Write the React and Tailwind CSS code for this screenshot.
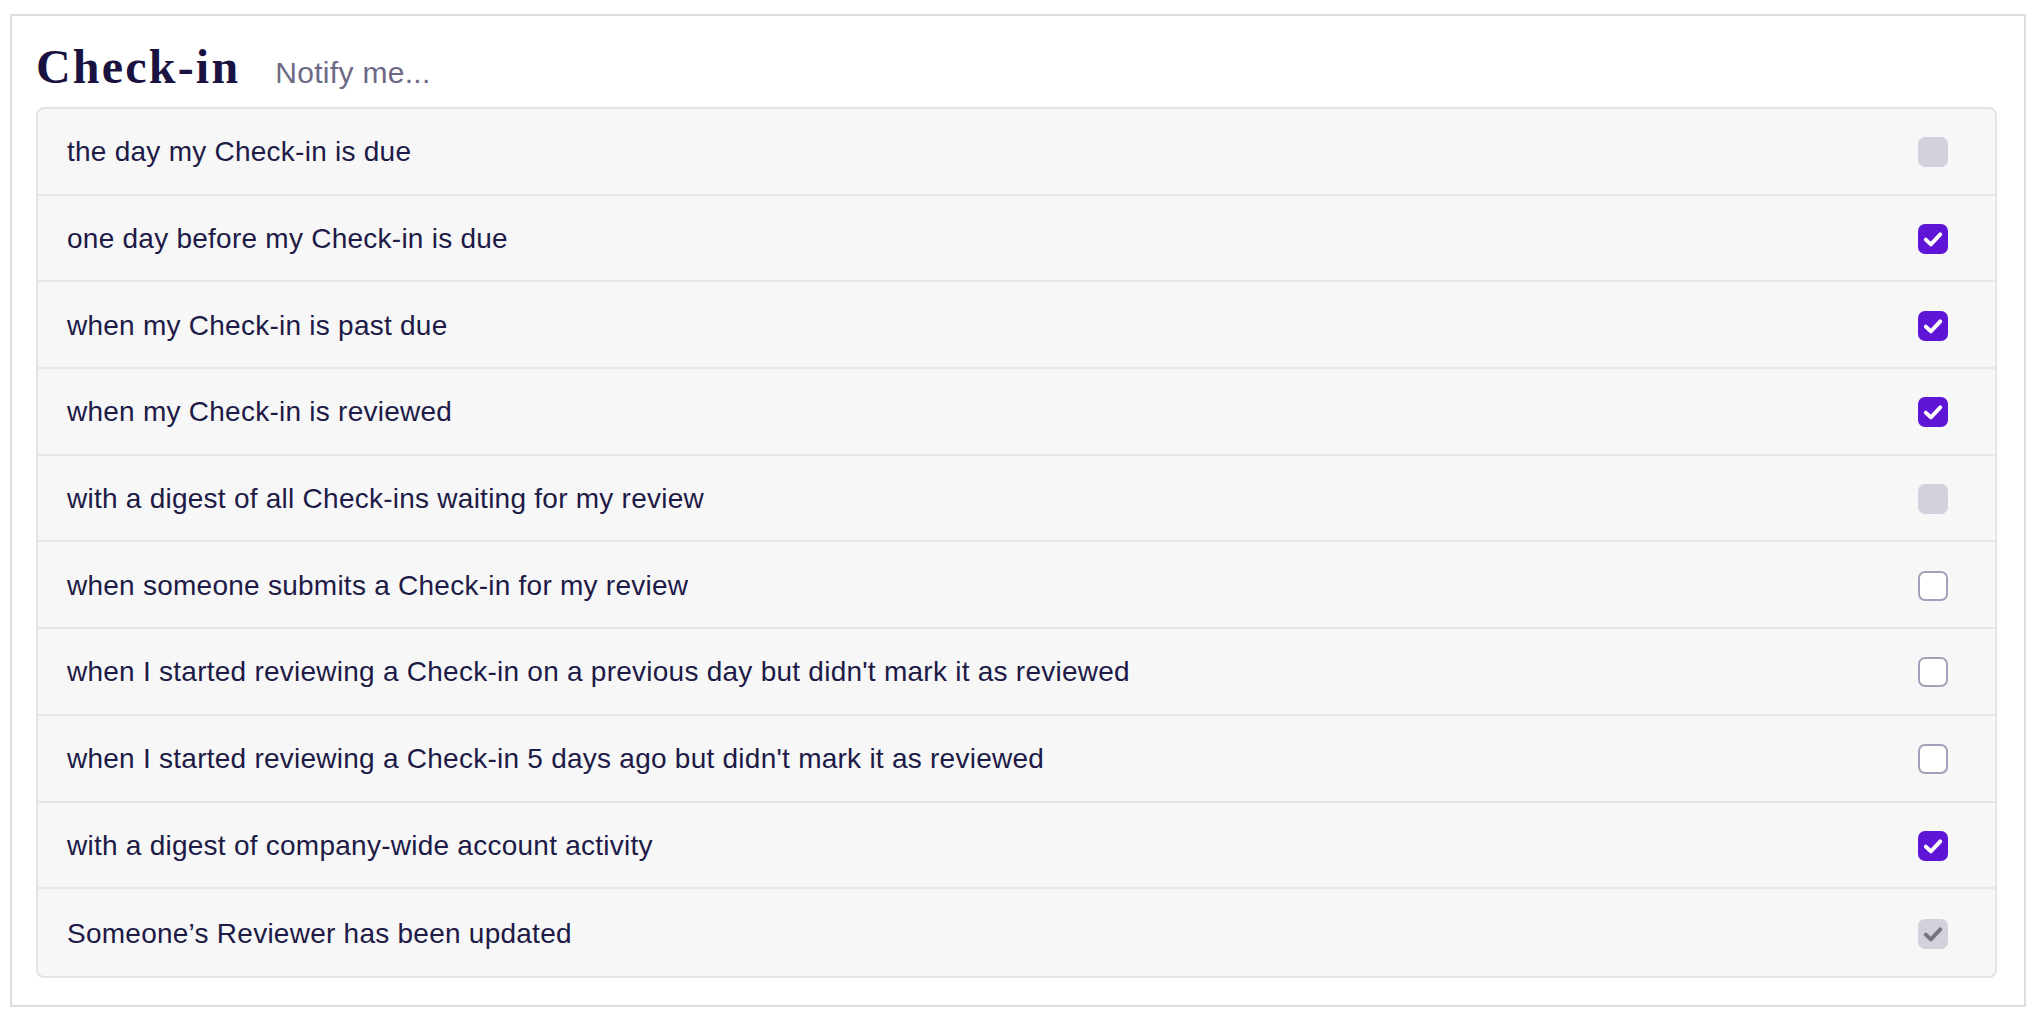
import React from "react";

const rows = [
  { label: "the day my Check-in is due", state: "disabled" },
  { label: "one day before my Check-in is due", state: "checked" },
  { label: "when my Check-in is past due", state: "checked" },
  { label: "when my Check-in is reviewed", state: "checked" },
  { label: "with a digest of all Check-ins waiting for my review", state: "disabled" },
  { label: "when someone submits a Check-in for my review", state: "empty" },
  { label: "when I started reviewing a Check-in on a previous day but didn't mark it as reviewed", state: "empty" },
  { label: "when I started reviewing a Check-in 5 days ago but didn't mark it as reviewed", state: "empty" },
  { label: "with a digest of company-wide account activity", state: "checked" },
  { label: "Someone\u2019s Reviewer has been updated", state: "disabledChecked" },
];

const CheckMark = ({ color }) => (
  <svg viewBox="0 0 30 30" className="w-full h-full">
    <path
      d="M7.8 15.6 L12.9 20.4 L22.3 10.4"
      fill="none"
      stroke={color}
      strokeWidth="3.9"
      strokeLinecap="round"
      strokeLinejoin="round"
    />
  </svg>
);

const Box = ({ state }) => {
  if (state === "checked") {
    return (
      <div className="w-[30px] h-[30px] rounded-[7px] bg-[#5f15d6]">
        <CheckMark color="#ffffff" />
      </div>
    );
  }
  if (state === "disabledChecked") {
    return (
      <div className="w-[30px] h-[30px] rounded-[7px] bg-[#d3d2dc]">
        <CheckMark color="#76757e" />
      </div>
    );
  }
  if (state === "disabled") {
    return <div className="w-[30px] h-[30px] rounded-[7px] bg-[#d3d2dc]" />;
  }
  return <div className="w-[30px] h-[30px] rounded-[7px] bg-white border-2 border-[#a3a1b9]" />;
};

export default function App() {
  return (
    <div className="w-[2038px] h-[1018px] bg-white pt-[14px] pl-[10px] pr-[12px] pb-[11px]">
      <div className="h-full border-2 border-[#dcdce3] pl-[24px] pr-[27px] pt-[27px]">
        {/* header */}
        <div className="flex items-baseline h-[50px] mb-[14px]">
          <h1
            className="text-[48px] leading-none font-bold tracking-[2.2px] text-[#1a1240]"
            style={{ fontFamily: '"Liberation Serif", serif' }}
          >
            Check-in
          </h1>
          <span
            className="ml-[35px] text-[30px] leading-none tracking-[0.3px] text-[#6d6985]"
            style={{ fontFamily: '"Liberation Sans", sans-serif' }}
          >
            Notify me...
          </span>
        </div>

        {/* settings list */}
        <div
          className="border-2 border-[#e3e3e8] rounded-[8px] bg-[#f7f7f8] divide-y-2 divide-[#e6e6ea]"
          style={{ fontFamily: '"Liberation Sans", sans-serif' }}
        >
          {rows.map((r) => (
            <div key={r.label} className="h-[86.7px] flex items-center justify-between pl-[29px] pr-[47px] pt-[2px]">
              <span className="text-[28px] tracking-[0.25px] text-[#201a46]">{r.label}</span>
              <Box state={r.state} />
            </div>
          ))}
        </div>
      </div>
    </div>
  );
}
